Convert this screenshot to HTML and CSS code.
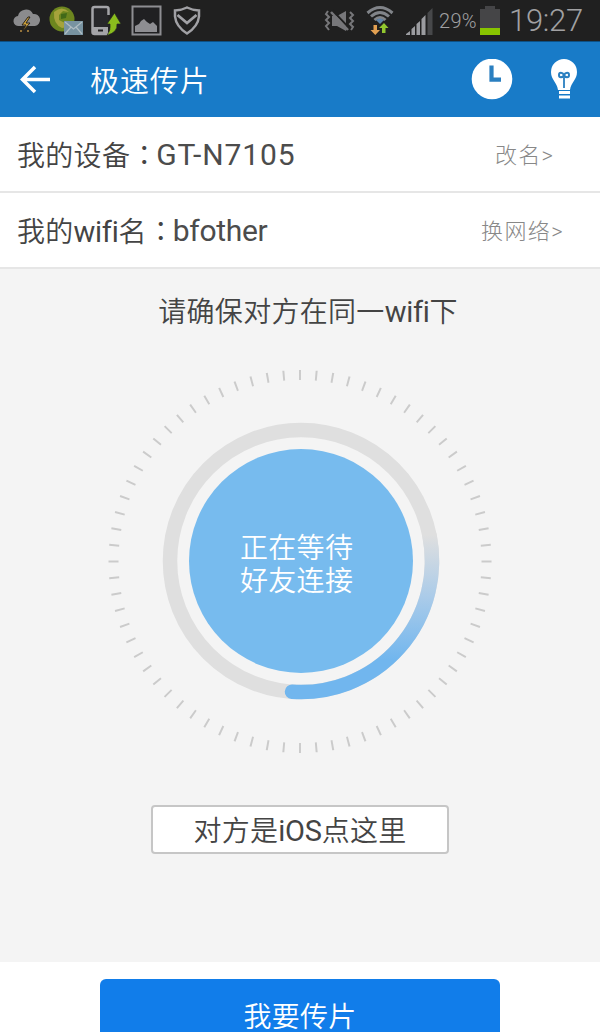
FILE: index.html
```html
<!DOCTYPE html>
<html lang="zh-CN">
  <head>
    <meta charset="UTF-8" />
    <title>极速传片</title>
    <link rel="stylesheet" href="styles.css">
  </head>
  <body>
    <div class="status-bar">
      <svg class="status-icons" width="210" height="41" viewBox="0 0 210 41">
        <!-- weather -->
        <path d="M19 26a5 5 0 0 1-1-10 8 8 0 0 1 15-2 6 6 0 0 1 2 12z" fill="#8b8b8d" />
        <path d="M28 17l-6 8h4l-4 7 8-9h-4l4-6z" fill="#d2a53c" stroke="#28231c" stroke-width="1" />
        <path d="M20 31h2M27 31h2" stroke="#94733a" stroke-width="2" />
        <!-- globe and mail -->
        <circle cx="62" cy="19" r="12.5" fill="#6d861f" />
        <path d="M54 12q8-7 15 0l-6-1-4 4v5l6 3 7-2q-3 7-10 7-9-4-8-16z" fill="#a5a33b" />
        <path d="M61 14l6-1-1 5-5 1z" fill="#416918" />
        <rect x="64" y="21" width="19" height="14" fill="#7893a1" />
        <path d="M65 22l8.500 7 8.500-7M65 34l6-7M82 34l-6-7" fill="none" stroke="#b0bdc3" stroke-width="1.200" />
        <!-- phone upload -->
        <path d="M108.500 15V9q0-2-2-2h-12q-2 0-2 2v23q0 2 2 2h12q2 0 2-2" fill="#27272a" stroke="#a4a4a8" stroke-width="2.500" />
        <path d="M93 27h15v6H93z" fill="#a4a4a8" />
        <path d="M98 30.500h5" stroke="#202022" stroke-width="2" />
        <path d="M114.500 13l6.500 11h-4q1 8-10 11.500 4-5.500 3-11.500h-3z" fill="#8abd1d" stroke="#242522" stroke-width=".7" />
        <!-- picture -->
        <rect x="132.500" y="6.500" width="28" height="28" fill="#202022" stroke="#8e8e92" stroke-width="2" />
        <path d="M135 32v-6l4-2 2-3 3-2 3 3 3 2 3-2 4 4v6z" fill="#8e8e92" />
        <!-- shield -->
        <path d="M187 7.500q5 2.500 12 3v6q-1 10-12 17-11-7-12-17v-6q7-.5 12-3z" fill="none" stroke="#a1a1a5" stroke-width="2.500" />
        <path d="M177.500 15l9.500 8 9.500-8" fill="none" stroke="#a1a1a5" stroke-width="2.800" />
      </svg>
      <div class="status-right">
        <svg width="110" height="41" viewBox="324 0 110 41">
          <!-- vibrate, muted -->
          <path d="M332 16h5l9-5v20l-9-5h-5z" fill="#77777a" />
          <path d="M328 11l-2 3 3 3-3 3 3 3-3 3 3 4M350 12l3 3-3 3 3 3-3 3 3 3-2 3" fill="none" stroke="#77777a" stroke-width="2" />
          <path d="M332 10l18 19" stroke="#202020" stroke-width="2" />
          <path d="M331 12l17 18" stroke="#77777a" stroke-width="2.500" />
          <!-- wifi -->
          <g fill="none" stroke="#818489" stroke-width="3">
            <path d="M367.500 13q12.500-11 25 0" />
            <path d="M371 16.500q9-8 18 0" />
            <path d="M374.500 20q5.500-5 11 0" />
          </g>
          <path d="M376 20q4-3 8 0l-4 4z" fill="#5e83a9" />
          <path d="M373.500 25h3.500v5h3l-4.750 5-4.750-5h3z" fill="#e2a052" />
          <path d="M384 23l4.500 5h-3v5h-3.500v-5h-3z" fill="#91c72f" />
          <!-- signal -->
          <path d="M406 35v-1l4-3v4zM411.500 35v-6l3.500-3v9zM416.500 35V24l3.500-3v14zM421.500 35V19l4-4v20z" fill="#9b9ca0" />
          <path d="M427.500 35V13l5-5v27z" fill="#47484a" />
        </svg>
        <span class="battery-level">29%</span>
        <svg class="battery" width="20" height="30" viewBox="0 0 20 30">
          <path d="M5 0h10v3h5v20H0V3h5z" fill="#454547" />
          <path d="M0 22h20v7H0z" fill="#88c400" />
        </svg>
        <span class="clock">19:27</span>
      </div>
    </div>

    <header class="title-bar">
      <svg width="32" height="30" viewBox="0 0 32 30">
        <path d="M30 14.500H3M15 2L2.500 14.500 15 27" fill="none" stroke="#fff" stroke-width="3.500" />
      </svg>
      <h1>极速传片</h1>
      <svg class="history" width="42" height="42" viewBox="0 0 42 42">
        <circle cx="21" cy="20" r="20.300" fill="#fff" />
        <path d="M20.500 6.500v14.200h9.500" fill="none" stroke="#2a7fc0" stroke-width="4.200" />
      </svg>
      <svg width="28" height="42" viewBox="0 0 28 42">
        <path d="M14 0A13 13 0 0 0 1 13c0 8 6 10 7 18h12c1-8 7-10 7-18A13 13 0 0 0 14 0z" fill="#fff" />
        <path d="M9 33.500h11M9 38h11" stroke="#fff" stroke-width="2.800" />
        <path d="M14 29V15.500" fill="none" stroke="#2a7fc0" stroke-width="1.800" />
        <path d="M14 16c-1.500-3-5-3-5 0s3.500 3 5 0c1.500-3 5-3 5 0s-3.500 3-5 0" fill="none" stroke="#2a7fc0" stroke-width="2" />
      </svg>
    </header>

    <div class="row">
      <span class="label">我的设备<span class="colon" lang="zh-TW">：</span></span>
      <span class="value device">GT-N7105</span>
      <a class="rename">改名&gt;</a>
    </div>
    <div class="row">
      <span class="label">我的<span class="latin">wifi</span>名<span class="colon" lang="zh-TW">：</span></span>
      <span class="value ssid">bfother</span>
      <a class="network">换网络&gt;</a>
    </div>

    <main>
      <p class="tip">请确保对方在同一<span class="latin">wifi</span>下</p>
      <div class="radar">
        <svg width="400" height="400" viewBox="100 361 400 400">
          <defs>
            <linearGradient id="sweep" gradientUnits="userSpaceOnUse" x1="0" y1="535" x2="0" y2="660">
              <stop offset="0" stop-color="#dfdfdf" />
              <stop offset="0.500" stop-color="#aacbe9" />
              <stop offset="1" stop-color="#71b6ee" />
            </linearGradient>
          </defs>
          <circle class="ticks" cx="300" cy="561.500" r="186.500" pathLength="720" />
          <circle class="track" cx="301" cy="561" r="131" />
          <path class="progress" d="M429.500 535.500A131 131 0 0 1 292 691.700" />
          <circle cx="301" cy="561" r="112" fill="#77bbee" />
        </svg>
        <div class="waiting">正在等待<br>好友连接</div>
      </div>
      <button class="ios-button">对方是<span class="latin">iOS</span>点这里</button>
    </main>

    <footer>
      <button class="send-button">我要传片</button>
    </footer>
  </body>
</html>
```
FILE: styles.css
```css
* {
  box-sizing: border-box;
}

body {
  margin: 0;
  height: 1032px;
  overflow: hidden;
  display: flex;
  flex-direction: column;
  font-family: Roboto, "Noto Sans CJK SC", sans-serif;
  font-weight: 350;
  font-size: 28px;
  letter-spacing: 0.3px;
  color: #444;
  background: #fff;
}

svg {
  display: block;
  flex: none;
}

button {
  font: inherit;
  letter-spacing: inherit;
  padding: 0;
}

/* Status bar */
.status-bar {
  height: 41px;
  flex: none;
  display: flex;
  justify-content: space-between;
  background: #202020;
  color: #a1a1a3;
}

.status-right {
  display: flex;
  align-items: center;
  padding-right: 18px;
}

.battery-level {
  width: 46px;
  padding-left: 5px;
  font-size: 20px;
}

.clock {
  width: 73px;
  margin-left: 9px;
  font-size: 31px;
  letter-spacing: -0.3px;
}

/* Title bar */
.title-bar {
  height: 76px;
  flex: none;
  display: flex;
  align-items: center;
  padding: 0 22px 0 20px;
  background: #187bc8;
  border-top: 1px solid #0d5186;
}

h1 {
  margin: -2px auto 0 38px;
  font-size: 29px;
  font-weight: 350;
  letter-spacing: 0.9px;
  color: #fff;
}

.history {
  margin-right: 37px;
}

/* Device and network rows */
.row {
  height: 76px;
  flex: none;
  display: flex;
  align-items: center;
  padding-left: 17px;
  border-bottom: 2px solid #e6e6e6;
}

.label {
  white-space: nowrap;
}

.latin {
  font-size: 29px;
  font-weight: 400;
  letter-spacing: -0.3px;
}

.colon {
  font-family: "Noto Sans CJK TC", sans-serif;
  letter-spacing: -2px;
}

.value {
  font-size: 30px;
  font-weight: 400;
  color: #4c4c4c;
}

.device {
  letter-spacing: 0.9px;
}

.ssid {
  letter-spacing: -0.3px;
}

.row a {
  margin-left: auto;
  margin-top: -2px;
  font-size: 22px;
  font-weight: 300;
  color: #888;
}

.rename {
  padding-right: 46px;
  letter-spacing: 1.2px;
}

.network {
  padding-right: 36px;
  letter-spacing: 1.4px;
}

/* Waiting area */
main {
  height: 693px;
  flex: none;
  display: flex;
  flex-direction: column;
  align-items: center;
  background: #f4f4f4;
}

.tip {
  margin: 23px 0 0 16px;
  height: 69px;
  line-height: 40px;
}

.radar {
  position: relative;
  height: 400px;
}

.ticks {
  fill: none;
  stroke: #cbcbcb;
  stroke-width: 10;
  stroke-dasharray: 1.2 8.8;
  stroke-dashoffset: 0.6;
}

.track {
  fill: none;
  stroke: #dfdfdf;
  stroke-width: 14.5;
}

.progress {
  fill: none;
  stroke: url(#sweep);
  stroke-width: 14.5;
  stroke-linecap: round;
}

.waiting {
  position: absolute;
  left: 140px;
  top: 171px;
  line-height: 33px;
  color: #fff;
}

.ios-button {
  width: 298px;
  height: 49px;
  margin-top: 44px;
  padding-bottom: 1px;
  border: 2px solid #c6c6c6;
  border-radius: 4px;
  background: #fff;
  color: #444;
}

.send-button {
  display: block;
  width: 400px;
  height: 74px;
  margin: 17px auto 0;
  padding-bottom: 3px;
  border: 0;
  border-radius: 6px;
  background: #117dea;
  color: #fff;
}
```
